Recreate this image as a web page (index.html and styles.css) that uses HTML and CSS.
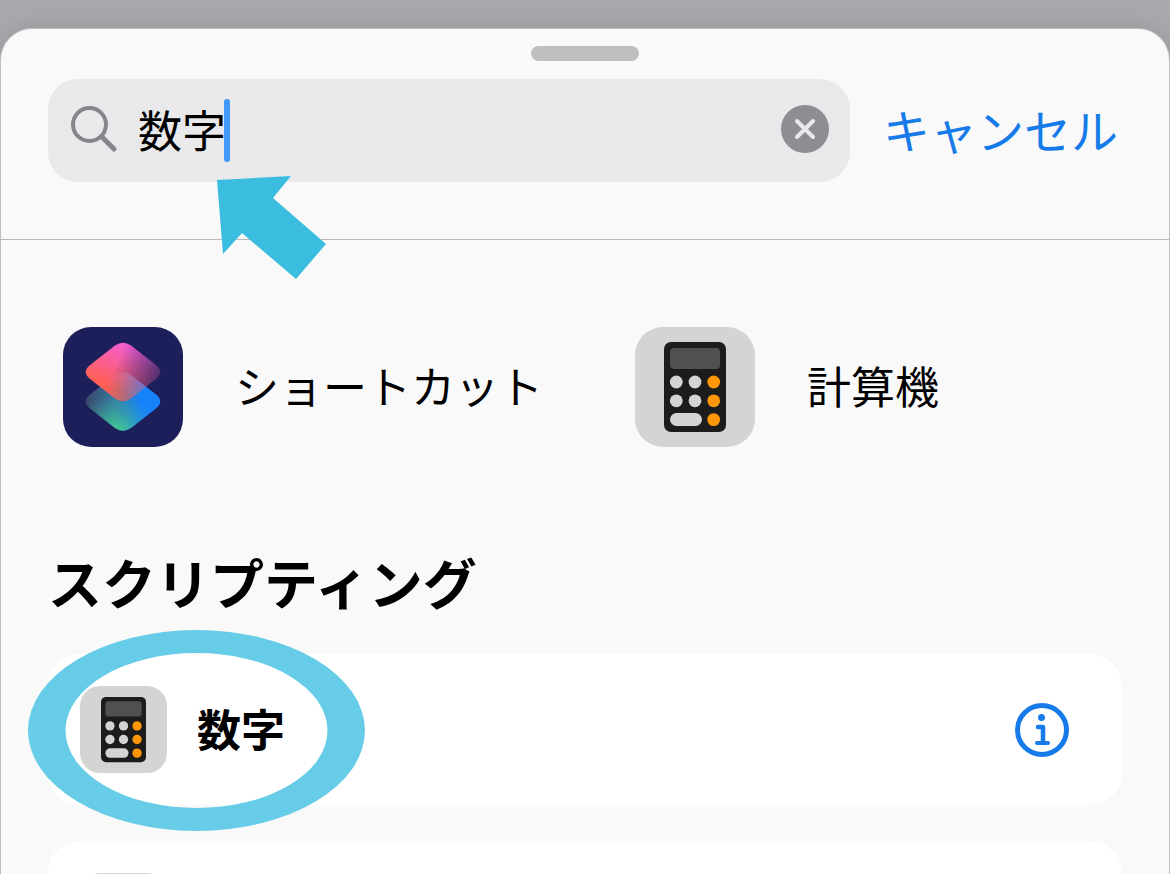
FILE: index.html
```html
<!DOCTYPE html>
<html lang="ja">
<head>
  <meta charset="UTF-8">
  <meta name="viewport" content="width=device-width, initial-scale=1.0">
  <title>ショートカット</title>
  <link rel="stylesheet" href="styles.css">
</head>
<body>
  <svg class="defs" aria-hidden="true">
    <symbol id="calculator" viewBox="0 0 120 120">
      <rect x="29" y="15" width="62" height="90" rx="7" fill="#1c1c1c"/>
      <rect x="35" y="21" width="50" height="21" rx="4" fill="#505050"/>
      <g fill="#d4d4d4">
        <circle cx="41.3" cy="55" r="6.4"/>
        <circle cx="60" cy="55" r="6.4"/>
        <circle cx="41.3" cy="73.8" r="6.4"/>
        <circle cx="60" cy="73.8" r="6.4"/>
        <rect x="35" y="86" width="32" height="13" rx="6.5"/>
      </g>
      <g fill="#ff9709">
        <circle cx="78.7" cy="55" r="6.4"/>
        <circle cx="78.7" cy="73.8" r="6.4"/>
        <circle cx="78.7" cy="92.6" r="6.4"/>
      </g>
    </symbol>
  </svg>

  <main class="sheet">
    <div class="handle"></div>

    <form class="search">
      <div class="field">
        <svg class="search-icon" viewBox="0 0 48 48" fill="none" stroke="#85858a" stroke-linecap="round" aria-hidden="true">
          <circle cx="19.500" cy="19.500" r="16.500" stroke-width="4"/>
          <path d="M32 32L44 44" stroke-width="5"/>
        </svg>
        <div class="entry">
          <input type="text" value="数字" aria-label="検索">
          <span class="caret"></span>
        </div>
        <button class="clear" type="button" aria-label="消去">
          <svg viewBox="0 0 48 48" aria-hidden="true">
            <circle cx="24" cy="24" r="24" fill="#8d8d92"/>
            <path d="M16 16L32 32M32 16L16 32" stroke="#e9e9eb" stroke-width="4" stroke-linecap="round"/>
          </svg>
        </button>
      </div>
      <button class="cancel" type="button">キャンセル</button>
      <svg class="arrow" viewBox="0 0 110 104" aria-hidden="true">
        <path d="M0 4L74 0L56 22L109 68L79 103L25 57L6 78Z" fill="#3bbde0"/>
      </svg>
    </form>

    <section class="apps">
      <a class="app" href="#">
        <svg class="app-icon navy" viewBox="0 0 120 120" aria-hidden="true">
          <defs>
            <linearGradient id="blue" gradientUnits="userSpaceOnUse" x1="23" y1="66" x2="92" y2="72">
              <stop offset="0" stop-color="#3b4668"/>
              <stop offset="0.45" stop-color="#337da5"/>
              <stop offset="0.8" stop-color="#1683fb"/>
            </linearGradient>
            <radialGradient id="green" gradientUnits="userSpaceOnUse" cx="52" cy="108" r="42">
              <stop offset="0" stop-color="#45dc8b"/>
              <stop offset="1" stop-color="#3aa5a0" stop-opacity="0"/>
            </radialGradient>
            <linearGradient id="pink" gradientUnits="userSpaceOnUse" x1="66" y1="18" x2="46" y2="60">
              <stop offset="0" stop-color="#f45fd4"/>
              <stop offset="1" stop-color="#ff5f55"/>
            </linearGradient>
            <linearGradient id="fade" gradientUnits="userSpaceOnUse" x1="54" y1="34" x2="94" y2="52">
              <stop offset="0" stop-color="#fff"/>
              <stop offset="1" stop-color="#fff" stop-opacity="0.25"/>
            </linearGradient>
            <mask id="fade-mask" maskUnits="userSpaceOnUse" x="0" y="0" width="120" height="120">
              <rect width="120" height="120" fill="url(#fade)"/>
            </mask>
            <path id="tile" d="M52 18.500Q60 13 68 18.500L93 38Q101.500 45 93 52L68 71.500Q60 77 52 71.500L27 52Q18.500 45 27 38Z"/>
            <path id="lower-tile" d="M52 48Q60 42.500 68 48L93 67.500Q101.500 74.500 93 81.500L68 101Q60 106.500 52 101L27 81.500Q18.500 74.500 27 67.500Z"/>
          </defs>
          <use href="#lower-tile" fill="url(#blue)"/>
          <use href="#lower-tile" fill="url(#green)"/>
          <g mask="url(#fade-mask)"><use href="#tile" fill="url(#pink)"/></g>
        </svg>
        <span class="app-name">ショートカット</span>
      </a>
      <a class="app" href="#">
        <svg class="app-icon" aria-hidden="true"><use href="#calculator"/></svg>
        <span class="app-name">計算機</span>
      </a>
    </section>

    <section class="actions">
      <h2>スクリプティング</h2>
      <ul>
        <li class="card">
          <svg class="card-icon" aria-hidden="true"><use href="#calculator"/></svg>
          <span class="card-title">数字</span>
          <button class="info" type="button" aria-label="情報">
            <svg viewBox="0 0 54 54" fill="none" stroke="#167be8" stroke-linecap="round" stroke-linejoin="round" aria-hidden="true">
              <circle cx="27" cy="27" r="24.500" stroke-width="5"/>
              <circle cx="26.500" cy="14.500" r="3.500" fill="#167be8" stroke="none"/>
              <path d="M23 24H28V40" stroke-width="4.500"/>
              <path d="M22 40H33" stroke-width="4"/>
            </svg>
          </button>
          <svg class="ring" viewBox="0 0 337 201" aria-hidden="true">
            <path fill="#5ac8e5" fill-opacity="0.92" fill-rule="evenodd" d="M0 100.500a168.500 100.500 0 1 0 337 0a168.500 100.500 0 1 0 -337 0ZM37.500 100.500a131 77.500 0 1 0 262 0a131 77.500 0 1 0 -262 0Z"/>
          </svg>
        </li>
        <li class="card">
          <svg class="card-icon" aria-hidden="true"></svg>
        </li>
      </ul>
    </section>
  </main>
</body>
</html>
```

FILE: styles.css
```css
* {
  margin: 0;
  padding: 0;
  box-sizing: border-box;
}
body {
  display: flex;
  flex-direction: column;
  height: 100vh;
  padding-top: 28px;
  overflow: hidden;
  background-color: #a9a8ad;
  color: #000;
  font-family: "Noto Sans CJK JP", sans-serif;
  font-size: 44px;
  font-weight: 400;
  line-height: 60px;
}
button {
  border: none;
  background: none;
  font: inherit;
  cursor: pointer;
}
svg {
  display: block;
}
.defs {
  position: absolute;
  width: 0;
  height: 0;
}
.sheet {
  flex: 1;
  min-height: 0;
  overflow: hidden;
  border: 1px solid #bebec0;
  border-bottom: none;
  border-radius: 32px 32px 0 0;
  background-color: #f9f9f9;
  box-shadow: 0 0 24px rgba(0, 0, 0, 0.12);
}
.handle {
  width: 108px;
  height: 15px;
  margin: 17px auto 18px;
  border-radius: 8px;
  background-color: #bfbfc1;
}

/* search bar */
.search {
  position: relative;
  display: flex;
  align-items: center;
  gap: 33px;
  padding: 0 51px 57px 47px;
  border-bottom: 1px solid #b9b9ba;
}
.field {
  flex: 1;
  min-width: 0;
  display: flex;
  align-items: center;
  height: 103px;
  padding: 0 21px 4px 22px;
  border-radius: 30px;
  background-color: #e9e9eb;
}
.search-icon {
  width: 48px;
  height: 48px;
  margin-right: 20px;
}
.entry {
  position: relative;
  flex: 1;
  min-width: 0;
}
.entry input {
  display: block;
  width: 100%;
  height: 60px;
  border: none;
  outline: none;
  background: none;
  color: inherit;
  font: inherit;
}
.caret {
  position: absolute;
  top: 0;
  left: 86px;
  width: 6px;
  height: 63px;
  border-radius: 3px;
  background-color: #3f98fa;
}
.clear,
.clear svg {
  width: 48px;
  height: 48px;
}
.cancel {
  padding-bottom: 4px;
  color: #167be8;
  font-size: 47px;
  white-space: nowrap;
}
.arrow {
  position: absolute;
  top: 97px;
  left: 216px;
  width: 110px;
  height: 104px;
}

/* apps */
.apps {
  display: grid;
  grid-template-columns: 1fr 1fr;
  gap: 70px;
  padding: 87px 47px;
}
.app {
  display: flex;
  align-items: center;
  gap: 52px;
  padding-left: 15px;
  color: inherit;
  text-decoration: none;
  white-space: nowrap;
}
.app-icon {
  flex: none;
  width: 120px;
  height: 120px;
  border-radius: 28px;
  background-color: #d4d4d2;
}
.navy {
  background-color: #1d1f5b;
}
.app-name,
.card-title {
  padding-bottom: 4px;
}

/* action list */
.actions {
  padding: 0 47px;
}
.actions h2 {
  padding-top: 8px;
  margin-bottom: 32px;
  font-size: 54px;
  font-weight: 700;
  line-height: 80px;
}
.actions ul {
  display: flex;
  flex-direction: column;
  gap: 36px;
  list-style: none;
}
.card {
  position: relative;
  display: flex;
  align-items: center;
  gap: 30px;
  padding: 32px 53px 32px 32px;
  border-radius: 32px;
  background-color: #fff;
}
.card-icon {
  position: relative;
  z-index: 1;
  flex: none;
  width: 87px;
  height: 87px;
  border-radius: 20px;
  background-color: #d4d4d2;
}
.card-title {
  flex: 1;
  font-weight: 700;
}
.info,
.info svg {
  width: 54px;
  height: 54px;
}
.ring {
  position: absolute;
  top: -24px;
  left: -20px;
  width: 337px;
  height: 201px;
}
```
